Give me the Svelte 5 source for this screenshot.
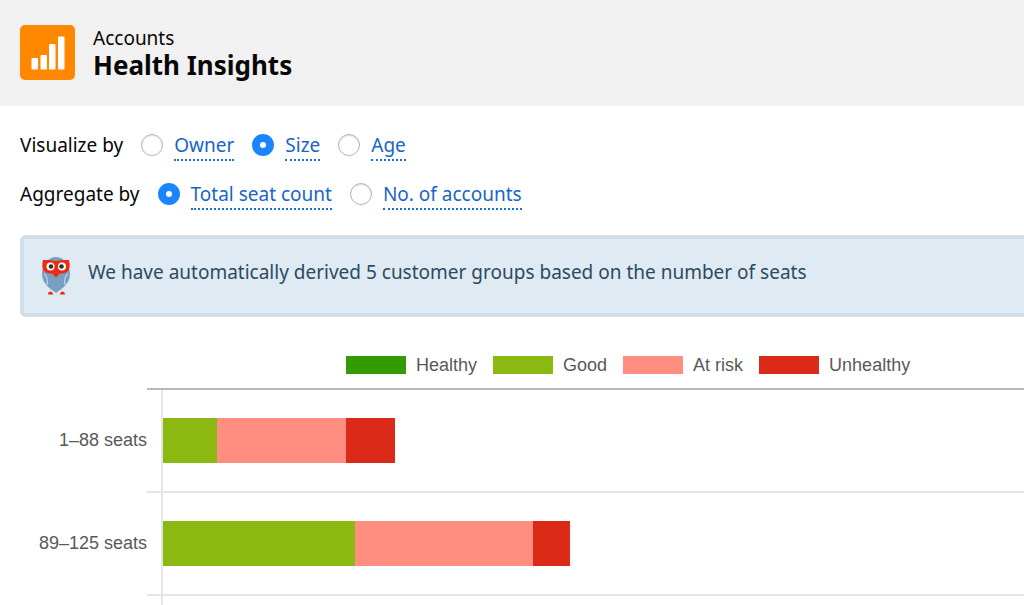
<script lang="ts">
	interface Option {
		value: string;
		label: string;
	}

	interface Group {
		label: string;
		/** Seats per status, in the order of `statuses` */
		seats: number[];
	}

	const visualizeOptions: Option[] = [
		{ value: 'owner', label: 'Owner' },
		{ value: 'size', label: 'Size' },
		{ value: 'age', label: 'Age' }
	];

	const aggregateOptions: Option[] = [
		{ value: 'seats', label: 'Total seat count' },
		{ value: 'accounts', label: 'No. of accounts' }
	];

	const statuses = [
		{ key: 'healthy', label: 'Healthy' },
		{ key: 'good', label: 'Good' },
		{ key: 'at-risk', label: 'At risk' },
		{ key: 'unhealthy', label: 'Unhealthy' }
	];

	const groups: Group[] = [
		{ label: '1–88 seats', seats: [0, 54, 129, 49] },
		{ label: '89–125 seats', seats: [0, 192, 178, 37] }
	];

	const axisMax = 861;

	let visualizeBy = $state('size');
	let aggregateBy = $state('seats');
</script>

<div class="page">
	<header class="page-header">
		<svg class="header-icon" viewBox="0 0 55 55" aria-hidden="true">
			<rect width="55" height="55" rx="5" fill="#ff8800" />
			<g fill="#fff">
				<rect x="11.5" y="33" width="6.5" height="11.5" rx="1" />
				<rect x="20.5" y="30" width="6.5" height="14.5" rx="1" />
				<rect x="29" y="19" width="6.5" height="25.5" rx="1" />
				<rect x="38" y="11.5" width="6.5" height="33" rx="1" />
			</g>
		</svg>
		<div>
			<p class="object-name">Accounts</p>
			<h1>Health Insights</h1>
		</div>
	</header>

	<main>
		<form class="controls">
			<div class="control-row" role="radiogroup" aria-labelledby="visualize-label">
				<span id="visualize-label">Visualize by</span>
				{#each visualizeOptions as option}
					<label>
						<input type="radio" name="visualize" value={option.value} bind:group={visualizeBy} />
						<span class="option-text">{option.label}</span>
					</label>
				{/each}
			</div>
			<div class="control-row" role="radiogroup" aria-labelledby="aggregate-label">
				<span id="aggregate-label">Aggregate by</span>
				{#each aggregateOptions as option}
					<label>
						<input type="radio" name="aggregate" value={option.value} bind:group={aggregateBy} />
						<span class="option-text">{option.label}</span>
					</label>
				{/each}
			</div>
		</form>

		<div class="notice">
			<svg class="owl" viewBox="0 0 28 38" aria-hidden="true">
				<path d="M14 0C21 0 28 7 28 17c0 9-7 14-14 19C7 31 0 26 0 17 0 7 7 0 14 0z" fill="#789fc0" />
				<path d="M2 17c3 2 4 6 3 11M26 17c-3 2-4 6-3 11" fill="none" stroke="#c3d8e7" stroke-width="1.2" />
				<path
					d="M1 3h7l6 1 6-1h7c1 4 1 9-1 11-2 2-5 2.500-8 2.500l-4 4-4-4c-3 0-6-.5-8-2.500C0 12 0 7 1 3z"
					fill="#ed2a12"
				/>
				<circle cx="8.500" cy="9.500" r="4" fill="#fff" />
				<circle cx="20" cy="9.500" r="4" fill="#fff" />
				<circle cx="9" cy="9.500" r="2.300" fill="#26343d" />
				<circle cx="19.500" cy="9.500" r="2.300" fill="#26343d" />
				<path d="M6 37.500c0-4 5-4 5 0zM18 37.500c0-4 5-4 5 0z" fill="#ed2a12" />
			</svg>
			<p>We have automatically derived 5 customer groups based on the number of seats</p>
		</div>

		<section class="chart" aria-label="Account health by size">
			<ul class="chart-legend">
				{#each statuses as status}
					<li><span class="swatch {status.key}"></span>{status.label}</li>
				{/each}
			</ul>
			{#each groups as group}
				<div class="chart-row">
					<span class="group-label">{group.label}</span>
					<div class="band">
						<div class="plot">
							{#each statuses as status, i}
								<span class="bar {status.key}" style="width: {(group.seats[i] / axisMax) * 100}%"></span>
							{/each}
						</div>
					</div>
				</div>
			{/each}
			<div class="chart-row chart-end">
				<span class="group-label"></span>
				<div class="band"><div class="plot"></div></div>
			</div>
		</section>
	</main>
</div>

<style>
	:global(body) {
		margin: 0;
		background: #fff;
	}

	.page {
		display: flex;
		flex-direction: column;
		min-height: 100vh;
		font-family: 'Noto Sans', 'Open Sans', sans-serif;
		font-size: 19px;
		line-height: 28px;
		color: #080707;
	}

	p,
	h1,
	ul {
		margin: 0;
		padding: 0;
	}

	.page-header {
		display: flex;
		align-items: center;
		gap: 18px;
		padding: 25px 20px 26px;
		background: #f2f1f1;
	}

	.header-icon {
		width: 55px;
		height: 55px;
	}

	.object-name {
		line-height: 24px;
	}

	h1 {
		font-size: 26px;
		line-height: 30px;
		font-weight: 700;
	}

	main {
		flex: 1;
		display: flex;
		flex-direction: column;
		padding-left: 20px;
	}

	.controls {
		display: flex;
		flex-direction: column;
		gap: 17px;
		padding: 23px 0 25px;
	}

	.control-row {
		display: flex;
		align-items: center;
		gap: 18px;
	}

	label {
		display: flex;
		align-items: center;
		gap: 11px;
		cursor: pointer;
	}

	input {
		appearance: none;
		box-sizing: border-box;
		width: 22px;
		height: 22px;
		margin: 0;
		border: 1px solid #b4b4b4;
		border-radius: 50%;
		background: #fff;
		box-shadow: inset 0 1px 1px #ddd;
	}

	input:checked {
		border: 8px solid #1a85ff;
		box-shadow: none;
	}

	.option-text {
		padding-top: 2px;
		border-bottom: 2px dotted #1b6fd0;
		color: #1765c6;
	}

	.notice {
		display: flex;
		align-items: center;
		gap: 18px;
		padding: 18px;
		border: 4px solid #d3dfe8;
		border-right: 0;
		border-radius: 6px 0 0 6px;
		background: #e0eaf3;
		color: #2c4a60;
	}

	.notice p {
		padding-bottom: 8px;
	}

	.owl {
		flex: none;
		width: 28px;
		height: 38px;
	}

	.chart {
		flex: 1;
		display: flex;
		flex-direction: column;
		padding-top: 34px;
		font-family: 'Liberation Sans', Arial, sans-serif;
		font-size: 18px;
		color: #595959;
	}

	.chart-legend {
		display: flex;
		gap: 16px;
		padding: 0 0 9px 326px;
		list-style: none;
	}

	.chart-legend li {
		display: flex;
		align-items: center;
		gap: 10px;
	}

	.swatch {
		width: 60px;
		height: 18px;
	}

	.chart-row {
		display: flex;
	}

	.group-label {
		display: flex;
		align-items: center;
		justify-content: flex-end;
		width: 127px;
	}

	.band {
		flex: 1;
		padding-left: 14px;
		border-top: 2px solid #e5e5e5;
	}

	.chart-legend + .chart-row .band {
		border-top-color: #b8b8b8;
	}

	.plot {
		display: flex;
		padding: 28px 0;
		border-left: 2px solid #e5e5e5;
	}

	.bar {
		height: 45px;
	}

	.chart-end {
		flex: 1;
	}

	.chart-end .band {
		display: flex;
	}

	.chart-end .plot {
		padding: 0;
	}

	.healthy {
		background: #339b00;
	}

	.good {
		background: #8bb912;
	}

	.at-risk {
		background: #ff8d80;
	}

	.unhealthy {
		background: #db2b18;
	}
</style>
